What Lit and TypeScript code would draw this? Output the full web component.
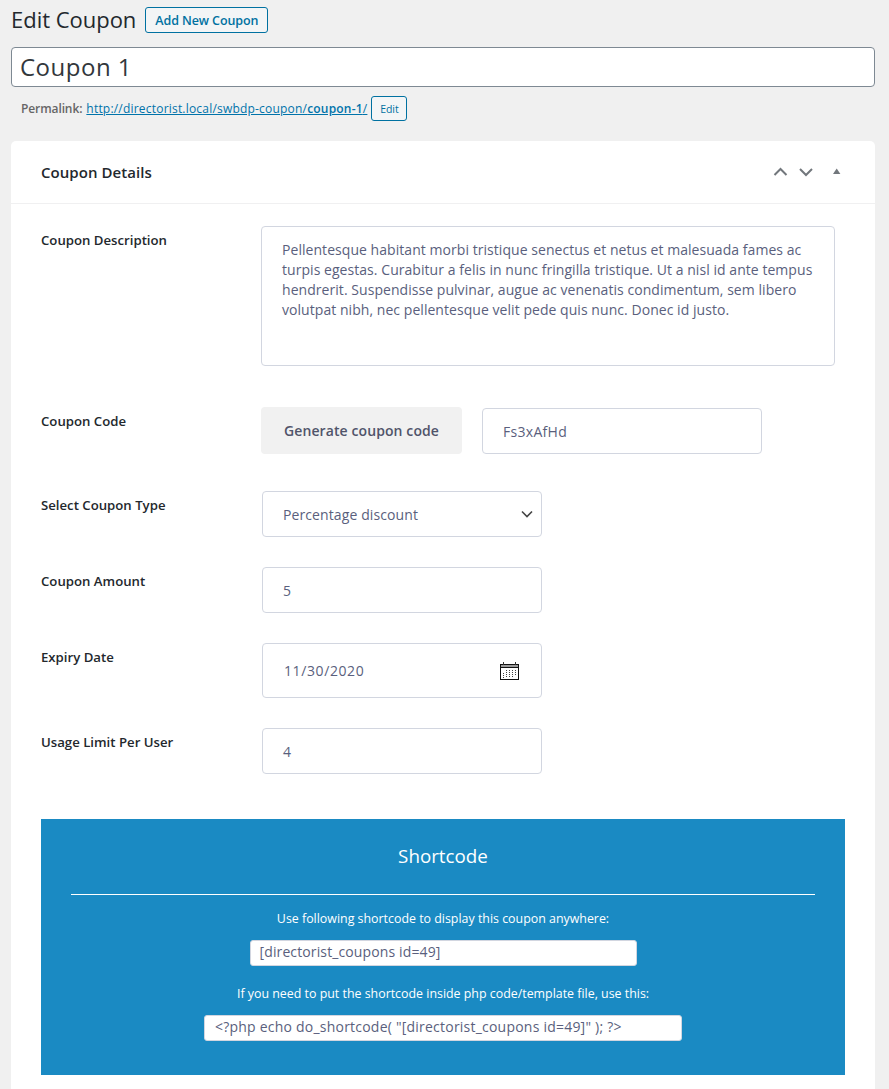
import { LitElement, html, css } from "lit";
import { customElement } from "lit/decorators.js";

@customElement("app-root")
export class AppRoot extends LitElement {
  static styles = css`
    :host {
      display: block;
      height: 1089px;
      overflow: hidden;
      background: #f0f0f0;
      font-family: "Open Sans", "Noto Sans", sans-serif;
      color: #1d2327;
    }
    * { box-sizing: border-box; }
    .page { padding: 7px 14px 0 11px; }
    .head { display: flex; align-items: center; gap: 9px; height: 26px; }
    h1 { margin: 0; font-size: 22px; font-weight: 400; line-height: 24px; padding-bottom: 2px; color: #23282d; letter-spacing: -0.02px; }
    .add {
      height: 26px; padding: 0 9px; border: 1px solid #0071a1; border-radius: 3px;
      color: #0071a1; background: #f3f5f6; font-size: 12.5px; font-weight: 600;
      display: flex; align-items: center; letter-spacing: -0.1px;
    }
    .title {
      margin-top: 14px; height: 40px; border: 1px solid #7e8993; border-radius: 4px;
      background: #fff; font-size: 24px; line-height: 38px; padding: 0 8px; color: #32373c;
      letter-spacing: 0.5px;
    }
    .perma {
      display: flex; align-items: center; height: 25px; margin-top: 9px; padding-left: 10px;
      font-size: 12px; color: #666; letter-spacing: -0.1px;
    }
    .perma b { font-weight: 600; }
    .perma a { color: #0073aa; text-decoration: underline; margin-left: 4px; letter-spacing: 0.2px; }
    .perma a b { color: #0073aa; }
    .mini {
      height: 25px; width: 36px; margin-left: 4px; justify-content: center; border: 1px solid #0071a1; border-radius: 3px;
      color: #0071a1; background: #f3f5f6; font-size: 10.5px; display: flex; align-items: center;
    }
    .card { margin-top: 20px; background: #fff; border-radius: 5px 5px 0 0; height: 960px; }
    .card-head {
      height: 63px; border-bottom: 1px solid #f0f0f1; display: flex; align-items: center;
      padding: 0 30px; justify-content: space-between;
    }
    .card-head h2 { margin: 0; font-size: 15px; font-weight: 600; color: #23282d; letter-spacing: 0.05px; }
    .ctl { display: flex; align-items: center; margin-right: -1px; }
    .ctl svg { display: block; }
    .body { padding: 22px 30px 0; }
    .row { display: grid; grid-template-columns: 220px 1fr; }
    .label { font-size: 13.2px; font-weight: 600; color: #23282d; line-height: 18px; padding-top: 5px; }
    .box {
      border: 1px solid #d2d6e0; border-radius: 4px; background: #fff; color: #5a5f7d;
      font-size: 14px; display: flex; align-items: center; padding: 0 20px; letter-spacing: 0.1px;
    }
    .desc {
      display: block; width: 574px; height: 140px; padding: 13px 20px; line-height: 20px;
      letter-spacing: 0.05px;
    }
    .r-code { margin-top: 41px; }
    .code-wrap { display: flex; align-items: center; gap: 20px; }
    .gen {
      width: 201px; height: 47px; background: #f1f1f1; border-radius: 4px; color: #50546a;
      font-size: 14px; font-weight: 600; display: flex; align-items: center; justify-content: center;
      letter-spacing: 0.1px;
    }
    .code { width: 280px; height: 46px; margin-top: 1px; letter-spacing: 0.3px; }
    .field { width: 280px; margin-left: 1px; }
    .h46 { height: 46px; }
    .r-type { margin-top: 37px; }
    .r-amount { margin-top: 30px; }
    .r-date { margin-top: 30px; }
    .r-limit { margin-top: 30px; }
    .date { height: 55px; justify-content: space-between; padding: 0 22px 0 21px; letter-spacing: 0.6px; }
    .select { justify-content: space-between; padding: 0 8px 0 20px; }
    .short {
      margin-top: 45px; height: 256px; background: #1a8ac3; color: #fff; padding: 0 30px;
      display: flex; flex-direction: column; align-items: center;
    }
    .short h3 { margin: 25px 0 0; font-size: 18.8px; font-weight: 400; line-height: 25px; }
    .short hr { width: 100%; margin: 25px 0 0; border: 0; border-top: 1px solid #fff; height: 1px; }
    .short p { margin: 0; font-size: 12.4px; line-height: 16px; }
    .p1 { margin-top: 16px !important; }
    .p2 { margin-top: 20px !important; }
    .sc {
      height: 26px; background: #fff; border: 1px solid #d2d6e0; border-radius: 3px; color: #5a5f7d;
      font-size: 14px; display: flex; align-items: center; padding-bottom: 3px;
    }
    .sc1 { width: 387px; padding-left: 9px; margin-top: 13px; letter-spacing: 0.12px; }
    .sc2 { width: 478px; padding-left: 10px; margin-top: 13px; letter-spacing: 0.22px; }
  `;

  render() {
    return html`
      <div class="page">
        <div class="head">
          <h1>Edit Coupon</h1>
          <div class="add">Add New Coupon</div>
        </div>
        <div class="title">Coupon 1</div>
        <div class="perma">
          <b>Permalink:</b>
          <a>http://directorist.local/swbdp-coupon/<b>coupon-1</b>/</a>
          <div class="mini">Edit</div>
        </div>
        <div class="card">
          <div class="card-head">
            <h2>Coupon Details</h2>
            <div class="ctl">
              <svg width="26" height="16" viewBox="0 0 26 16"><path d="M8.5 11l6-6 6 6" fill="none" stroke="#72777c" stroke-width="2"/></svg>
              <svg width="26" height="16" viewBox="0 0 26 16"><path d="M8 5l6 6 6-6" fill="none" stroke="#72777c" stroke-width="2"/></svg>
              <svg width="28" height="16" viewBox="0 0 28 16"><path d="M15 10l3.7-5.5 3.7 5.5z" fill="#72777c"/></svg>
            </div>
          </div>
          <div class="body">
            <div class="row">
              <div class="label">Coupon Description</div>
              <div class="box desc">Pellentesque habitant morbi tristique senectus et netus et malesuada fames ac turpis egestas. Curabitur a felis in nunc fringilla tristique. Ut a nisl id ante tempus hendrerit. Suspendisse pulvinar, augue ac venenatis condimentum, sem libero volutpat nibh, nec pellentesque velit pede quis nunc. Donec id justo.</div>
            </div>
            <div class="row r-code">
              <div class="label">Coupon Code</div>
              <div class="code-wrap">
                <div class="gen">Generate coupon code</div>
                <div class="box code">Fs3xAfHd</div>
              </div>
            </div>
            <div class="row r-type">
              <div class="label">Select Coupon Type</div>
              <div class="box field h46 select">
                <span>Percentage discount</span>
                <svg width="12" height="8" viewBox="0 0 12 8"><path d="M1 1.5l5 5 5-5" fill="none" stroke="#444" stroke-width="1.6"/></svg>
              </div>
            </div>
            <div class="row r-amount">
              <div class="label">Coupon Amount</div>
              <div class="box field h46">5</div>
            </div>
            <div class="row r-date">
              <div class="label">Expiry Date</div>
              <div class="box field date">
                <span>11/30/2020</span>
                <svg width="19" height="18" viewBox="0 0 19 18">
                  <rect x="0.5" y="2.5" width="18" height="15" fill="#fff" stroke="#111"/>
                  <rect x="1" y="3" width="17" height="2" fill="#999"/>
                  <path d="M1 5.5h17" stroke="#111"/>
                  <path d="M3.5 0v3M15.5 0v3" stroke="#333"/>
                  <path d="M6.5 8v8M9.5 8v8M12.5 8v8M15.5 8v5M3.5 11v5" stroke="#444" stroke-dasharray="1 1"/>
                </svg>
              </div>
            </div>
            <div class="row r-limit">
              <div class="label">Usage Limit Per User</div>
              <div class="box field h46">4</div>
            </div>
            <div class="short">
              <h3>Shortcode</h3>
              <hr />
              <p class="p1">Use following shortcode to display this coupon anywhere:</p>
              <div class="sc sc1">[directorist_coupons id=49]</div>
              <p class="p2">If you need to put the shortcode inside php code/template file, use this:</p>
              <div class="sc sc2">&lt;?php echo do_shortcode( "[directorist_coupons id=49]" ); ?&gt;</div>
            </div>
          </div>
        </div>
      </div>
    `;
  }
}
